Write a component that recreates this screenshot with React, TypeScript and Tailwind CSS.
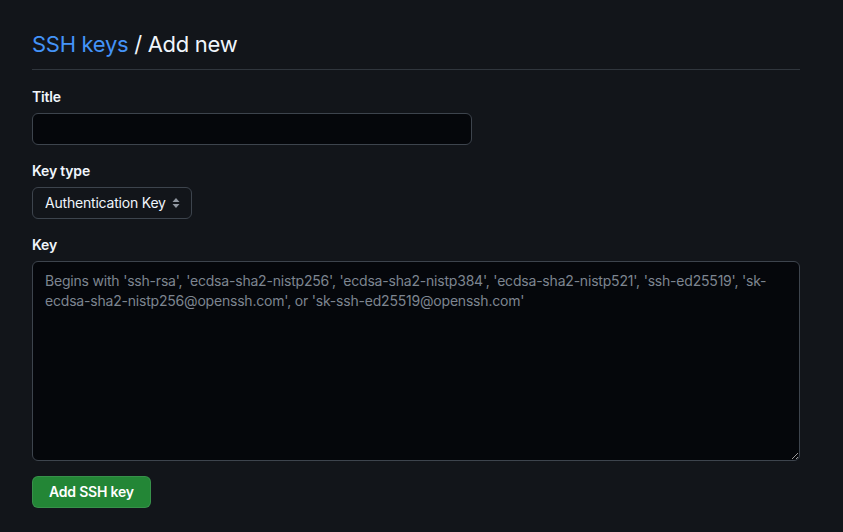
import { useState } from 'react';

export default function App() {
  const [title, setTitle] = useState('');
  const [keyType, setKeyType] = useState('auth');
  const [key, setKey] = useState('');

  return (
    <div
      className="min-h-screen bg-[#12151a] text-[#f0f6fc] text-sm tracking-[-0.2px]"
      style={{ fontFamily: 'Inter, "Noto Sans", sans-serif' }}
    >
      <div className="w-[768px] ml-8 pt-[29px]">
        <h2 className="text-[22px] leading-[30px] font-normal tracking-[-0.3px] pb-[10px] border-b border-[#30363d] mb-[17px]">
          <a href="#" className="text-[#4493f8]">SSH keys</a> / Add new
        </h2>

        <div className="mb-4">
          <label className="block font-semibold leading-5 mb-[6px]">Title</label>
          <input
            value={title}
            onChange={(e) => setTitle(e.target.value)}
            className="w-[440px] h-8 px-3 rounded-md bg-[#05070b] border border-[#3d444d] outline-none"
          />
        </div>

        <div className="mb-4">
          <label className="block font-semibold leading-5 mb-[6px]">Key type</label>
          <div className="relative inline-block align-top">
            <select
              value={keyType}
              onChange={(e) => setKeyType(e.target.value)}
              className="block appearance-none h-8 pl-3 pr-[25px] rounded-md bg-[#12151a] border border-[#3d444d] text-[#f0f6fc] outline-none"
            >
              <option value="auth">Authentication Key</option>
              <option value="sign">Signing Key</option>
            </select>
            <svg
              className="absolute right-[12px] top-[10px] pointer-events-none"
              width="8"
              height="12"
              viewBox="0 0 8 12"
              fill="#9198a1"
            >
              <path d="M4 1 L7.5 5 H0.5 Z" />
              <path d="M4 11 L7.5 7 H0.5 Z" />
            </svg>
          </div>
        </div>

        <div className="mb-[15px]">
          <label className="block font-semibold leading-5 mb-[6px]">Key</label>
          <textarea
            value={key}
            onChange={(e) => setKey(e.target.value)}
            placeholder="Begins with 'ssh-rsa', 'ecdsa-sha2-nistp256', 'ecdsa-sha2-nistp384', 'ecdsa-sha2-nistp521', 'ssh-ed25519', 'sk-ecdsa-sha2-nistp256@openssh.com', or 'sk-ssh-ed25519@openssh.com'"
            className="block w-full h-[200px] px-3 py-[9px] leading-5 rounded-md bg-[#05070b] border border-[#3d444d] outline-none placeholder:text-[#7d8590] text-[#f0f6fc]"
          />
        </div>

        <button className="h-8 px-4 rounded-md bg-[#238636] border border-[rgba(240,246,252,0.1)] text-white font-semibold">
          Add SSH key
        </button>
      </div>
    </div>
  );
}
